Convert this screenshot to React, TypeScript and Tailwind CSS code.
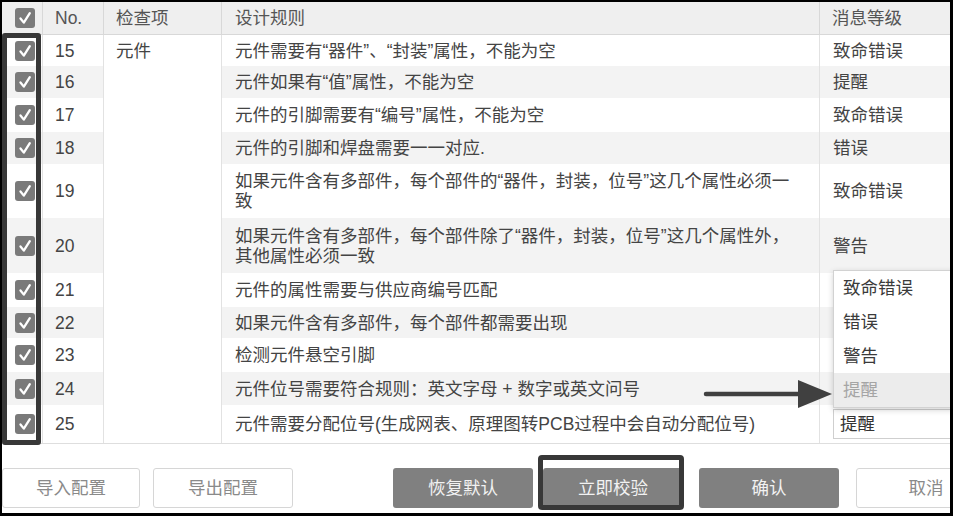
import { ReactNode } from "react";

type Row = {
  no: number;
  rule: ReactNode;
  level: string;
};

const rows: Row[] = [
  { no: 15, rule: "元件需要有“器件”、“封装”属性，不能为空", level: "致命错误" },
  { no: 16, rule: "元件如果有“值”属性，不能为空", level: "提醒" },
  { no: 17, rule: "元件的引脚需要有“编号”属性，不能为空", level: "致命错误" },
  { no: 18, rule: "元件的引脚和焊盘需要一一对应.", level: "错误" },
  {
    no: 19,
    rule: (
      <>
        如果元件含有多部件，每个部件的“器件，封装，位号”这几个属性必须一
        <br />致
      </>
    ),
    level: "致命错误",
  },
  {
    no: 20,
    rule: (
      <>
        如果元件含有多部件，每个部件除了“器件，封装，位号”这几个属性外，
        <br />
        其他属性必须一致
      </>
    ),
    level: "警告",
  },
  // levels of 21-24 sit under the open dropdown
  { no: 21, rule: "元件的属性需要与供应商编号匹配", level: "" },
  { no: 22, rule: "如果元件含有多部件，每个部件都需要出现", level: "" },
  { no: 23, rule: "检测元件悬空引脚", level: "" },
  { no: 24, rule: "元件位号需要符合规则：英文字母 + 数字或英文问号", level: "" },
  { no: 25, rule: "元件需要分配位号(生成网表、原理图转PCB过程中会自动分配位号)", level: "提醒" },
];

const options = ["致命错误", "错误", "警告", "提醒"];

function Check() {
  return (
    <svg width="20" height="20" viewBox="0 0 20 20">
      <rect x="0" y="0" width="20" height="20" rx="3" fill="#7a7a7a" />
      <path d="M5.5 10.5 L8.8 14.6 L14.8 5.2" fill="none" stroke="#fff" strokeWidth="2.3" strokeLinecap="round" strokeLinejoin="round" />
    </svg>
  );
}

export default function App() {
  return (
    <div className="relative h-[516px] w-[953px] overflow-hidden border-2 border-r-[3px] border-b-[3px] border-black bg-white font-['Liberation_Sans','Noto_Sans_CJK_SC',sans-serif] text-[17.5px] leading-[20px] text-[#444]">
      <div className="grid w-[1020px] grid-cols-[41px_61px_118px_598px_202px] grid-rows-[33px_31px_32px_34px_32px_54px_55px_34px_31px_34px_33px_38px] border-b border-[#dedede]">
        {/* header */}
        <div className="flex items-center justify-center border-r border-b border-[#d8d8d8] bg-[#efefef] pl-[6px]">
          <Check />
        </div>
        <div className="flex items-center border-r border-b border-[#d8d8d8] bg-[#efefef] pl-[12px] text-[#555]">No.</div>
        <div className="flex items-center border-r border-b border-[#d8d8d8] bg-[#efefef] pl-[12px] text-[#555]">检查项</div>
        <div className="flex items-center border-r border-b border-[#d8d8d8] bg-[#efefef] pl-[13px] text-[#555]">设计规则</div>
        <div className="flex items-center border-b border-[#d8d8d8] bg-[#efefef] pl-[12px] text-[#555]">消息等级</div>

        {/* merged category cell */}
        <div className="col-start-3 row-span-11 row-start-2 border-r border-[#e2e2e2] bg-white pl-[12px] pt-[6px]">元件</div>

        {rows.map((r, i) => {
          const bg = i % 2 === 1 ? "bg-[#f3f3f3]" : "bg-white";
          return [
            <div key={`c${r.no}`} className={`flex items-center justify-center border-r border-[#e2e2e2] pl-[6px] ${bg}`}>
              <Check />
            </div>,
            <div key={`n${r.no}`} className={`flex items-center border-r border-[#e2e2e2] pl-[12px] ${bg}`}>
              {r.no}
            </div>,
            <div key={`r${r.no}`} className={`flex items-center whitespace-nowrap border-r border-[#e2e2e2] pl-[13px] ${bg}`}>
              <span>{r.rule}</span>
            </div>,
            <div key={`l${r.no}`} className={`flex items-center pl-[13px] ${bg}`}>
              {r.no === 25 ? (
                <div className="flex h-[30px] w-[140px] items-center border border-[#cfcfcf] bg-white pl-[6px] text-[#333]">
                  {r.level}
                </div>
              ) : (
                <span>{r.level}</span>
              )}
            </div>,
          ];
        })}
      </div>

      {/* footer buttons */}
      <div className="flex pt-[24px]">
        <button className="h-[40px] w-[138px] shrink-0 rounded-[3px] border border-[#d6d6d6] bg-white text-[#8a8a8a]">导入配置</button>
        <button className="ml-[13px] h-[40px] w-[140px] shrink-0 rounded-[3px] border border-[#d6d6d6] bg-white text-[#8a8a8a]">导出配置</button>
        <button className="ml-[100px] h-[40px] w-[140px] shrink-0 rounded-[3px] bg-[#808080] text-[#f2f2f2]">恢复默认</button>
        <button className="ml-[10px] h-[40px] w-[140px] shrink-0 rounded-[3px] bg-[#808080] text-[#f2f2f2]">立即校验</button>
        <button className="ml-[16px] h-[40px] w-[140px] shrink-0 rounded-[3px] bg-[#808080] text-[#f2f2f2]">确认</button>
        <button className="ml-[17px] h-[40px] w-[140px] shrink-0 rounded-[3px] border border-[#d6d6d6] bg-white text-[#8a8a8a]">取消</button>
      </div>

      {/* dropdown menu */}
      <div className="absolute left-[831px] top-[268px] w-[140px] border border-[#d2d2d2] bg-white shadow-[0_2px_6px_rgba(0,0,0,0.18)]">
        {options.map((o) => (
          <div
            key={o}
            className={`flex h-[34px] items-center pl-[9px] ${o === "提醒" ? "bg-[#ececec] text-[#a5a5a5]" : "text-[#3a3a3a]"}`}
          >
            {o}
          </div>
        ))}
      </div>

      {/* annotation: checkbox column frame */}
      <div className="absolute left-0 top-[31px] h-[412px] w-[39px] rounded-[3px] border-[5px] border-[#383838]" />

      {/* annotation: arrow */}
      <svg className="absolute left-[701px] top-[376px]" width="132" height="32" viewBox="0 0 132 32">
        <line x1="3" y1="16" x2="98" y2="16" stroke="#404040" strokeWidth="4.5" strokeLinecap="round" />
        <polygon points="95,2 129,16 95,30" fill="#404040" />
      </svg>

      {/* annotation: verify button frame */}
      <div className="absolute left-[536px] top-[453px] h-[55px] w-[146px] rounded-[4px] border-[5px] border-[#383838]" />
    </div>
  );
}
